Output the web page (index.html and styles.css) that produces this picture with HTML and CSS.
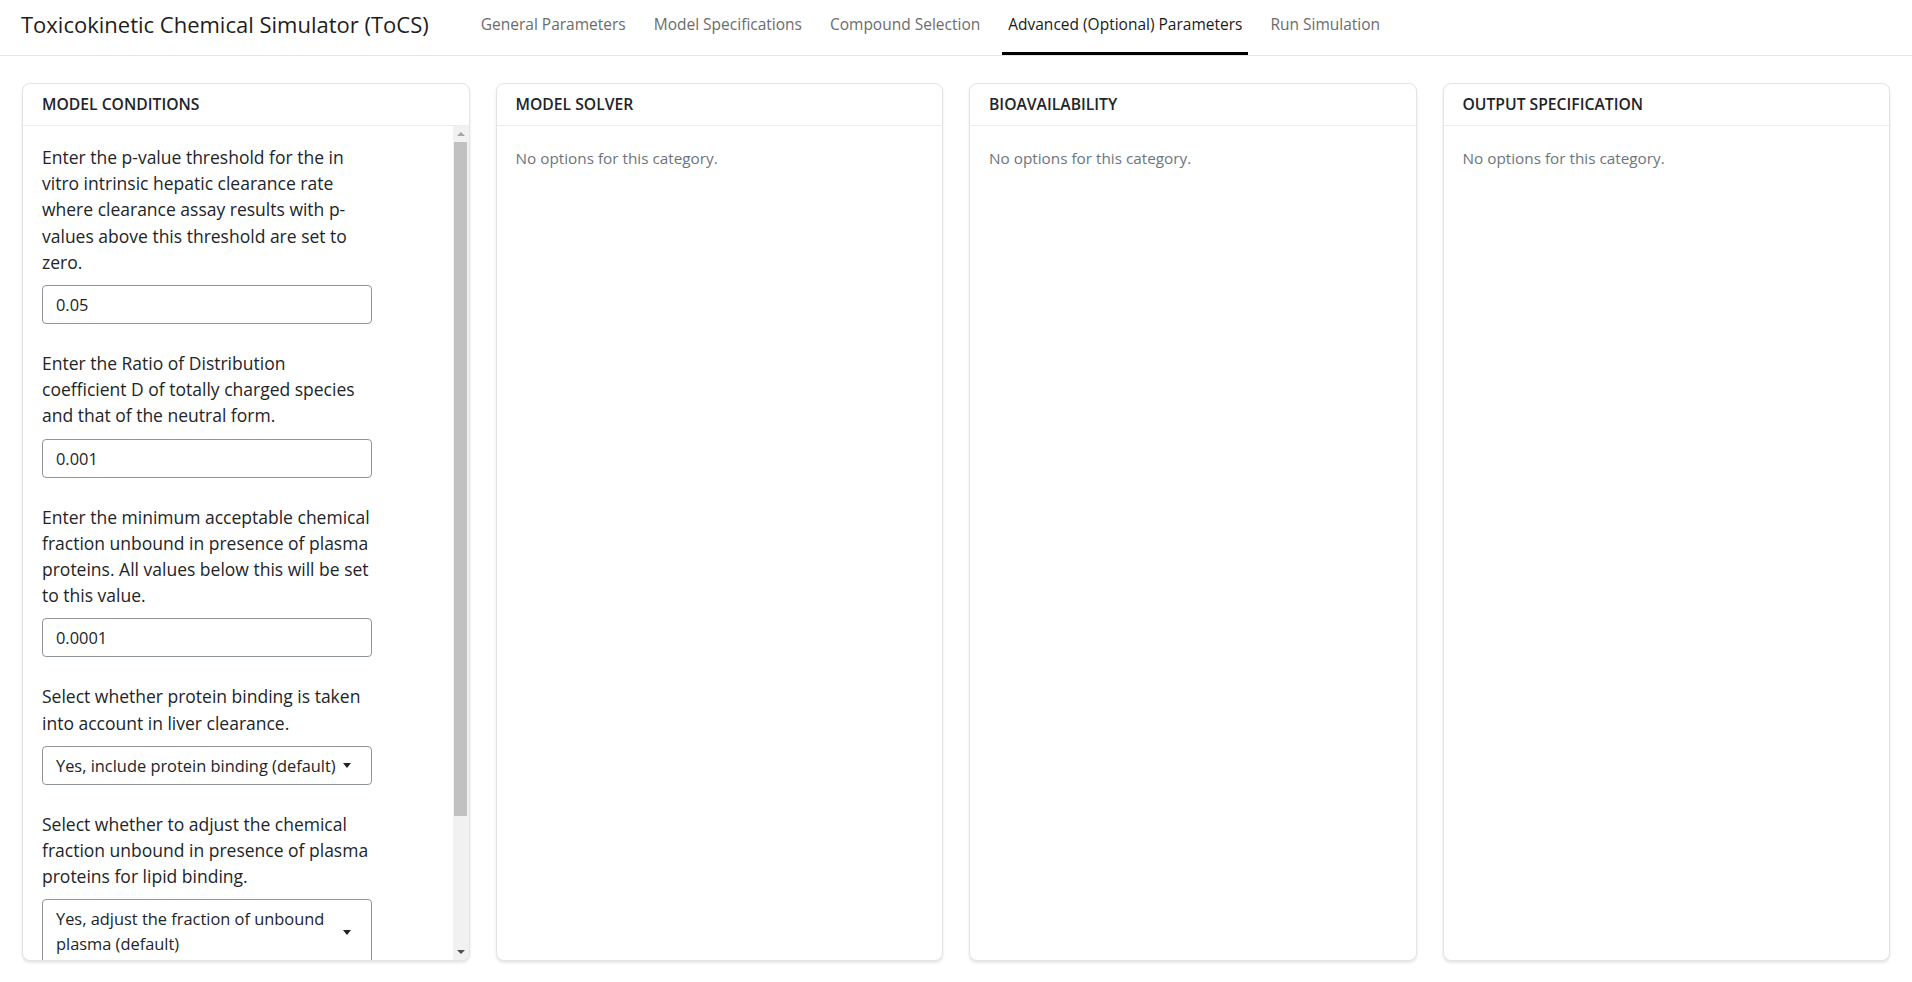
FILE: index.html
```html
<!DOCTYPE html>
<html lang="en">
<head>
<meta charset="utf-8">
<title>Toxicokinetic Chemical Simulator (ToCS)</title>
<link rel="stylesheet" href="styles.css">
</head>
<body>
<header class="navbar">
  <div class="brand">Toxicokinetic Chemical Simulator (ToCS)</div>
  <nav class="nav">
    <a class="nav-link" href="#">General Parameters</a>
    <a class="nav-link" href="#">Model Specifications</a>
    <a class="nav-link" href="#">Compound Selection</a>
    <a class="nav-link active" href="#">Advanced (Optional) Parameters</a>
    <a class="nav-link" href="#">Run Simulation</a>
  </nav>
</header>
<main class="cards">
  <section class="card">
    <div class="card-header">MODEL CONDITIONS</div>
    <div class="card-body scroll-wrap">
      <div class="scroll-content">
        <div class="field">
          <label class="label">Enter the p-value threshold for the in vitro intrinsic hepatic clearance rate where clearance assay results with p-values above this threshold are set to zero.</label>
          <div class="input">0.05</div>
        </div>
        <div class="field">
          <label class="label">Enter the Ratio of Distribution coefficient D of totally charged species and that of the neutral form.</label>
          <div class="input">0.001</div>
        </div>
        <div class="field">
          <label class="label">Enter the minimum acceptable chemical fraction unbound in presence of plasma proteins. All values below this will be set to this value.</label>
          <div class="input">0.0001</div>
        </div>
        <div class="field">
          <label class="label">Select whether protein binding is taken into account in liver clearance.</label>
          <div class="input select"><span class="select-text">Yes, include protein binding (default)</span><span class="caret"></span></div>
        </div>
        <div class="field">
          <label class="label">Select whether to adjust the chemical fraction unbound in presence of plasma proteins for lipid binding.</label>
          <div class="input select tall"><span class="select-text">Yes, adjust the fraction of unbound plasma (default)</span><span class="caret"></span></div>
        </div>
      </div>
      <div class="scrollbar" aria-hidden="true">
        <span class="sb-btn sb-up"></span>
        <span class="sb-track"><span class="sb-thumb"></span></span>
        <span class="sb-btn sb-down"></span>
      </div>
    </div>
  </section>
  <section class="card">
    <div class="card-header">MODEL SOLVER</div>
    <div class="card-body"><p class="empty">No options for this category.</p></div>
  </section>
  <section class="card">
    <div class="card-header">BIOAVAILABILITY</div>
    <div class="card-body"><p class="empty">No options for this category.</p></div>
  </section>
  <section class="card">
    <div class="card-header">OUTPUT SPECIFICATION</div>
    <div class="card-body"><p class="empty">No options for this category.</p></div>
  </section>
</main>
</body>
</html>
```
FILE: styles.css
```css
* { box-sizing: border-box; }
html, body { margin: 0; height: 100%; }
body {
  font-family: "Open Sans", "Noto Sans", sans-serif;
  font-size: 17.5px;
  color: #212529;
  background: #fff;
  overflow: hidden;
}
.navbar {
  display: flex;
  align-items: stretch;
  height: 56px;
  padding-left: 21px;
  border-bottom: 1px solid #e6e6e6;
}
.brand {
  align-self: center;
  font-size: 22px;
  color: #1d1d1d;
  margin-right: 46px;
  margin-top: -7px;
  white-space: nowrap;
}
.nav { display: flex; gap: 16px; }
.nav-link {
  display: flex;
  align-items: center;
  padding: 0 6px 4px;
  font-size: 15.5px;
  color: #6c6c6c;
  text-decoration: none;
  white-space: nowrap;
  border-bottom: 3px solid transparent;
}
.nav-link.active { color: #1a1a1a; border-bottom-color: #000; }

.cards {
  height: calc(100% - 56px);
  display: grid;
  grid-template-columns: repeat(4, 1fr);
  gap: 26px;
  padding: 27px 22px 21px;
}
.card {
  display: flex;
  flex-direction: column;
  min-height: 0;
  border: 1px solid #e4e4e4;
  border-radius: 8px;
  box-shadow: 0 2px 3px rgba(0,0,0,.10);
  overflow: hidden;
  background: #fff;
}
.card-header {
  flex: none;
  height: 42px;
  display: flex;
  align-items: center;
  padding: 0 19px 2px;
  font-size: 15.7px;
  font-weight: 600;
  border-bottom: 1px solid #ececec;
}
.card-body {
  flex: 1;
  min-height: 0;
  padding: 18px 19px;
}
.scroll-wrap { display: flex; padding: 0; }
.scroll-content {
  flex: 1;
  min-width: 0;
  overflow: hidden;
  padding: 18px 19px;
}
.scrollbar {
  flex: none;
  width: 16px;
  display: flex;
  flex-direction: column;
  background: #f1f1f1;
}
.sb-btn {
  flex: none;
  height: 16px;
  display: flex;
  align-items: center;
  justify-content: center;
}
.sb-btn::before {
  content: "";
  width: 0;
  height: 0;
  border-left: 4px solid transparent;
  border-right: 4px solid transparent;
}
.sb-up::before { border-bottom: 4px solid #a3a3a3; }
.sb-down::before { border-top: 4px solid #505050; }
.sb-track { flex: 1; display: flex; flex-direction: column; }
.sb-thumb {
  height: 84%;
  margin: 0 2px 0 1px;
  background: #c1c1c1;
}
.empty {
  margin: 4px 0 0;
  font-size: 15.3px;
  color: #6c757d;
}
.field { width: 330px; margin-bottom: 26px; }
.label {
  display: block;
  font-size: 17.5px;
  line-height: 26.2px;
  margin-bottom: 10px;
}
.input {
  height: 39px;
  display: flex;
  align-items: center;
  padding: 0 13px;
  border: 1px solid #8f959b;
  border-radius: 4px;
  font-size: 16.4px;
  color: #212529;
}
.select { justify-content: space-between; gap: 4px; padding-right: 20px; }
.select.tall { height: auto; padding-top: 7px; padding-bottom: 7px; line-height: 24.6px; }
.caret {
  flex: none;
  width: 0;
  height: 0;
  border-top: 5px solid #222;
  border-left: 4.5px solid transparent;
  border-right: 4.5px solid transparent;
}
```
